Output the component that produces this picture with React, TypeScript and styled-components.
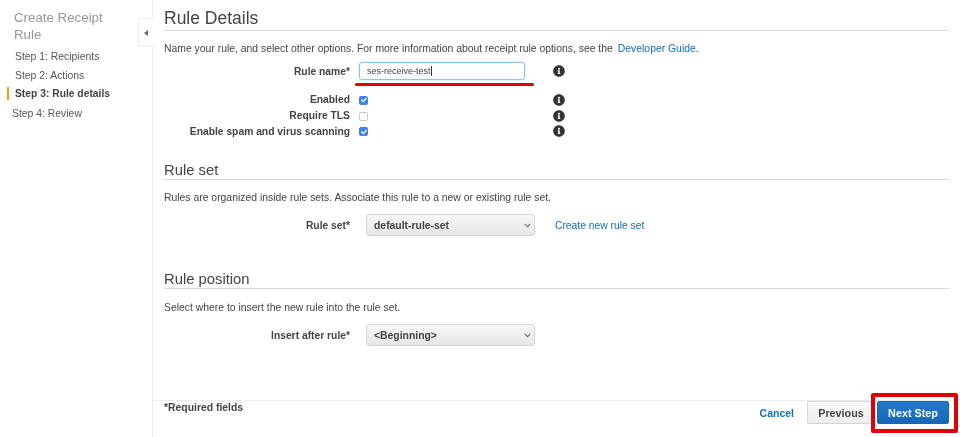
import React from 'react';
import styled, { createGlobalStyle } from 'styled-components';
import { FaInfoCircle, FaCheck, FaChevronDown } from 'react-icons/fa';

const GlobalStyle = createGlobalStyle`
  html, body {
    margin: 0;
    padding: 0;
    background: #fff;
    overflow: hidden;
  }
  body {
    font-family: 'Liberation Sans', Arial, sans-serif;
    color: #444;
  }
`;

const Page = styled.div`
  display: flex;
  width: 960px;
  height: 437px;
  filter: blur(0.4px);
`;

const Sidebar = styled.nav`
  position: relative;
  flex: 0 0 153px;
  box-sizing: border-box;
  padding: 9px 0 0 15px;
  border-right: 1px solid #eaeded;
`;

const SidebarTitle = styled.h3`
  margin: 0 0 4px -1px;
  width: 110px;
  font-size: 13.3px;
  font-weight: 400;
  line-height: 17px;
  color: #979797;
`;

const StepList = styled.ul`
  list-style: none;
  margin: 0;
  padding: 0;
`;

const Step = styled.li<{ $active?: boolean; $last?: boolean }>`
  position: relative;
  height: 18.7px;
  margin-left: ${p => (p.$last ? '-3px' : '0')};
  margin-top: ${p => (p.$last ? '1px' : '0')};
  font-size: ${p => (p.$active ? '10.3px' : '10.4px')};
  line-height: 19px;
  font-weight: ${p => (p.$active ? 700 : 400)};
  color: ${p => (p.$active ? '#444' : '#555')};

  ${p =>
    p.$active &&
    `&::before {
      content: '';
      position: absolute;
      left: -8px;
      top: 3px;
      width: 2px;
      height: 13px;
      background: #f7981d;
    }`}
`;

const CollapseTab = styled.div`
  position: absolute;
  right: -1px;
  top: 18px;
  display: flex;
  align-items: center;
  justify-content: center;
  width: 15px;
  height: 29px;
  box-sizing: border-box;
  background: #fff;
  border: 1px solid #eaeded;
  border-right: none;
  border-radius: 3px 0 0 3px;

  &::before {
    content: '';
    border-style: solid;
    border-width: 3.5px 4px 3.5px 0;
    border-color: transparent #666 transparent transparent;
  }
`;

const Main = styled.main`
  flex: 1;
  display: flex;
  flex-direction: column;
  min-width: 0;
`;

const Content = styled.div`
  flex: 1;
  padding: 9px 11px 0 11px;
`;

const Section = styled.section<{ $gap: number }>`
  margin-bottom: ${p => p.$gap}px;
`;

const PageTitle = styled.h2`
  margin: 0 0 10px;
  padding-bottom: 3px;
  height: 18px;
  font-size: 17.5px;
  line-height: 18px;
  font-weight: 400;
  color: #444;
  border-bottom: 1px solid #d5dbdb;
`;

const SectionTitle = styled.h2<{ $gap: number }>`
  margin: 0 0 ${p => p.$gap}px;
  height: 16px;
  padding-bottom: 1px;
  font-size: 14.8px;
  line-height: 16px;
  font-weight: 400;
  color: #444;
  border-bottom: 1px solid #d5dbdb;
`;

const Description = styled.p`
  margin: 0;
  height: 15px;
  font-size: 10.4px;
  line-height: 15px;
  color: #444;
`;

const Link = styled.a`
  color: #0f6cb8;
  margin-left: 5px;
`;

const FormRow = styled.div<{ $height: number; $gap?: number }>`
  display: grid;
  grid-template-columns: 186px 185px auto;
  column-gap: 9px;
  align-items: center;
  height: ${p => p.$height}px;
  margin-top: ${p => p.$gap ?? 0}px;
`;

const Label = styled.label`
  text-align: right;
  font-size: 10.3px;
  font-weight: 700;
  color: #444;
`;

const InputWrap = styled.div`
  position: relative;
  width: 166px;
`;

const TextInput = styled.div`
  box-sizing: border-box;
  height: 18px;
  padding-left: 7px;
  font-size: 9px;
  line-height: 17px;
  color: #444;
  border: 1px solid #8fc2ef;
  border-radius: 3px;
  box-shadow: 0 0 2px #a9d2f5;
`;

const Caret = styled.span`
  display: inline-block;
  width: 1px;
  height: 10px;
  vertical-align: -2px;
  background: #333;
`;

const RedUnderline = styled.div`
  position: absolute;
  left: -4px;
  top: 21px;
  width: 179px;
  height: 3px;
  border-radius: 2px;
  background: #e00007;
`;

const CheckBox = styled.span<{ $checked?: boolean }>`
  display: flex;
  align-items: center;
  justify-content: center;
  box-sizing: border-box;
  width: 9px;
  height: 9px;
  margin-top: 1px;
  color: #fff;
  font-size: 6px;
  border-radius: 2px;
  border: 1px solid ${p => (p.$checked ? '#3f83e6' : '#c9c9c9')};
  background: ${p => (p.$checked ? '#3f83e6' : '#fff')};
`;

const InfoIcon = styled(FaInfoCircle)`
  display: block;
  width: 12px;
  height: 12px;
  color: #333;
`;

const SelectRow = styled.div`
  display: flex;
  align-items: center;
  height: 22px;
  margin-top: 9px;
`;

const SelectLabel = styled(Label)`
  flex: 0 0 186px;
`;

const SelectBox = styled.div`
  position: relative;
  box-sizing: border-box;
  width: 169px;
  height: 22px;
  margin-left: 16px;
  padding-left: 7px;
  font-size: 10.4px;
  font-weight: 700;
  line-height: 21px;
  color: #444;
  border: 1px solid #d5d5d5;
  border-radius: 3px;
  background: linear-gradient(#f7f7f7, #e6e6e6);
`;

const SelectChevron = styled(FaChevronDown)`
  position: absolute;
  right: 3px;
  top: 7px;
  width: 7px;
  height: 7px;
  color: #666;
`;

const SideLink = styled.a`
  margin-left: 20px;
  font-size: 10.3px;
  color: #0f6cb8;
`;

const Footer = styled.footer`
  display: flex;
  align-items: flex-start;
  justify-content: space-between;
  height: 36px;
  padding: 0 11px;
  border-top: 1px solid #eaeded;
`;

const RequiredNote = styled.span`
  font-size: 10.4px;
  line-height: 14px;
  font-weight: 700;
  color: #444;
`;

const Actions = styled.div`
  display: flex;
  align-items: center;
  height: 23px;
`;

const CancelLink = styled.a`
  margin-right: 13px;
  font-size: 10.5px;
  font-weight: 700;
  color: #0f6cb8;
`;

const Button = styled.button<{ $primary?: boolean }>`
  position: relative;
  box-sizing: border-box;
  width: ${p => (p.$primary ? '72px' : '68px')};
  height: 23px;
  margin-left: ${p => (p.$primary ? '2px' : '0')};
  padding: 0;
  font-family: inherit;
  font-size: 10.8px;
  font-weight: 700;
  border-radius: 2px;
  color: ${p => (p.$primary ? '#fff' : '#444')};
  border: 1px solid ${p => (p.$primary ? '#1a65ad' : '#d5d5d5')};
  background: ${p => (p.$primary ? 'linear-gradient(#2478cc, #1667b5)' : 'linear-gradient(#fafafa, #ececec)')};
`;

const RedBox = styled.div`
  position: absolute;
  left: -7px;
  top: -9px;
  width: 87px;
  height: 40px;
  box-sizing: border-box;
  background: transparent;
  border: 4px solid #e00007;
  border-radius: 2px;
`;

const rules = [
  { label: 'Enabled', checked: true },
  { label: 'Require TLS', checked: false },
  { label: 'Enable spam and virus scanning', checked: true },
];

const App: React.FC = () => (
  <Page>
    <GlobalStyle />
    <Sidebar>
      <SidebarTitle>Create Receipt Rule</SidebarTitle>
      <StepList>
        <Step>Step 1: Recipients</Step>
        <Step>Step 2: Actions</Step>
        <Step $active>Step 3: Rule details</Step>
        <Step $last>Step 4: Review</Step>
      </StepList>
      <CollapseTab />
    </Sidebar>
    <Main>
      <Content>
        <Section $gap={23}>
          <PageTitle>Rule Details</PageTitle>
          <Description>
            Name your rule, and select other options. For more information about receipt rule options, see the
            <Link>Developer Guide</Link>.
          </Description>
          <FormRow $height={24} $gap={3}>
            <Label>Rule name*</Label>
            <InputWrap>
              <TextInput>
                ses-receive-test
                <Caret />
              </TextInput>
              <RedUnderline />
            </InputWrap>
            <InfoIcon />
          </FormRow>
          {rules.map((r, i) => (
            <FormRow key={r.label} $height={15.7} $gap={i === 0 ? 9 : 0}>
              <Label>{r.label}</Label>
              <CheckBox $checked={r.checked}>{r.checked && <FaCheck />}</CheckBox>
              <InfoIcon />
            </FormRow>
          ))}
        </Section>
        <Section $gap={35}>
          <SectionTitle $gap={10}>Rule set</SectionTitle>
          <Description>Rules are organized inside rule sets. Associate this rule to a new or existing rule set.</Description>
          <SelectRow>
            <SelectLabel>Rule set*</SelectLabel>
            <SelectBox>
              default-rule-set
              <SelectChevron />
            </SelectBox>
            <SideLink>Create new rule set</SideLink>
          </SelectRow>
        </Section>
        <Section $gap={0}>
          <SectionTitle $gap={11}>Rule position</SectionTitle>
          <Description>Select where to insert the new rule into the rule set.</Description>
          <SelectRow>
            <SelectLabel>Insert after rule*</SelectLabel>
            <SelectBox>
              &lt;Beginning&gt;
              <SelectChevron />
            </SelectBox>
          </SelectRow>
        </Section>
      </Content>
      <Footer>
        <RequiredNote>*Required fields</RequiredNote>
        <Actions>
          <CancelLink>Cancel</CancelLink>
          <Button>Previous</Button>
          <Button $primary>
            Next Step
            <RedBox />
          </Button>
        </Actions>
      </Footer>
    </Main>
  </Page>
);

export default App;
